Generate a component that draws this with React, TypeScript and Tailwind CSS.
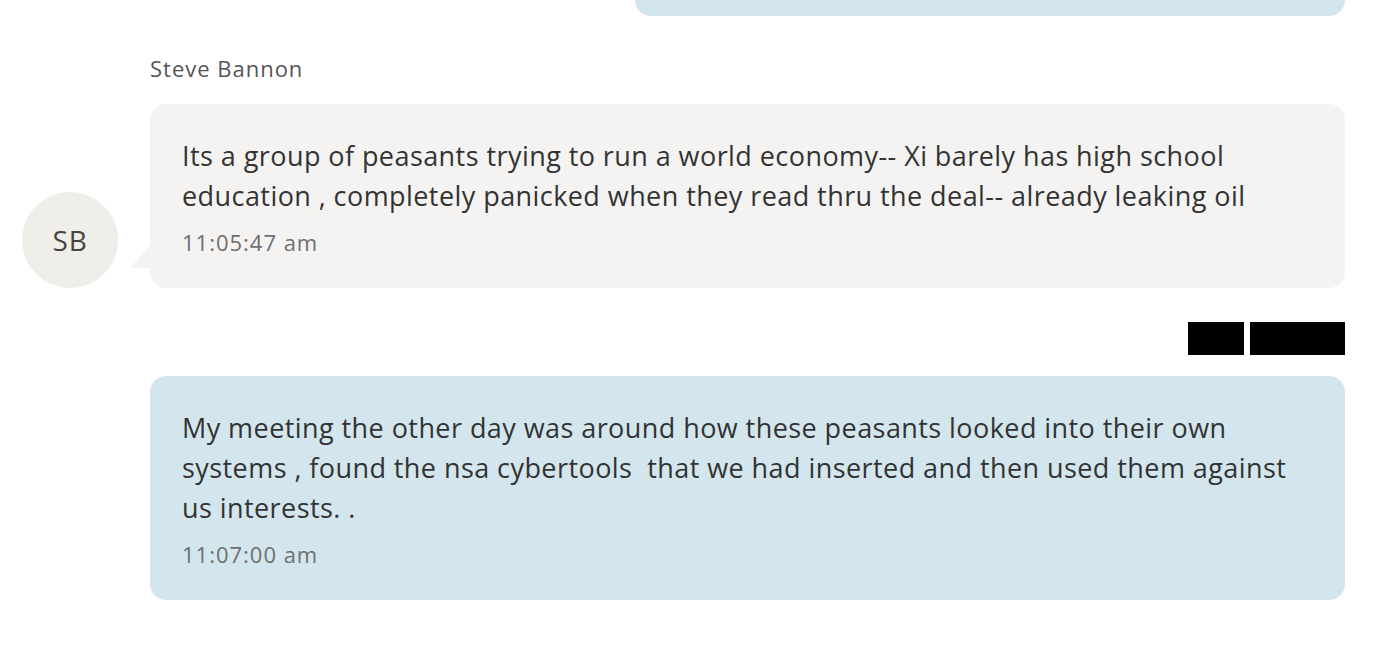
import React from 'react';

const font = { fontFamily: '"Open Sans", "Noto Sans", sans-serif' };

const Bubble = ({ text, time, tone }: { text: string; time: string; tone: 'gray' | 'blue' }) => (
  <div
    className={
      'rounded-[16px] px-8 pt-8 pb-8 ' + (tone === 'gray' ? 'bg-[#f4f3f2]' : 'bg-[#d3e6ee]')
    }
  >
    <p className="text-[27px] leading-[40px] tracking-[0.016em] text-[#333333] whitespace-pre-wrap">
      {text}
    </p>
    <div className="mt-3 text-[22px] leading-[28px] tracking-[0.045em] text-[#6f6f6f]">{time}</div>
  </div>
);

export default function App() {
  return (
    <div className="w-[1374px] h-[654px] bg-white overflow-hidden" style={font}>
      {/* bottom of the previous outgoing message */}
      <div className="flex justify-end pr-[29px]">
        <div className="w-[710px] h-[16px] bg-[#d3e6ee] rounded-b-[16px]" />
      </div>

      <div className="pl-[150px] pr-[29px] pt-[38px]">
        <div className="text-[22px] leading-[28px] tracking-[0.045em] text-[#555555]">Steve Bannon</div>

        <div className="relative mt-[22px]">
          <div className="absolute left-[-128px] top-[88px] w-[96px] h-[96px] rounded-full bg-[#efeee8] flex items-center justify-center text-[28px] tracking-[0.03em] text-[#444444]">
            SB
          </div>
          <div className="absolute left-[-20px] top-[141px] w-0 h-0 border-b-[23px] border-b-[#f4f3f2] border-l-[20px] border-l-transparent" />
          <Bubble
            tone="gray"
            text="Its a group of peasants trying to run a world economy-- Xi barely has high school education , completely panicked when they read thru the deal-- already leaking oil"
            time="11:05:47 am"
          />
        </div>

        <div className="flex justify-end gap-[6px] mt-[34px] mb-[21px]">
          <div className="w-[56px] h-[33px] bg-black" />
          <div className="w-[95px] h-[33px] bg-black" />
        </div>

        <Bubble
          tone="blue"
          text="My meeting the other day was around how these peasants looked into their own systems , found the nsa cybertools  that we had inserted and then used them against us interests. ."
          time="11:07:00 am"
        />
      </div>
    </div>
  );
}
